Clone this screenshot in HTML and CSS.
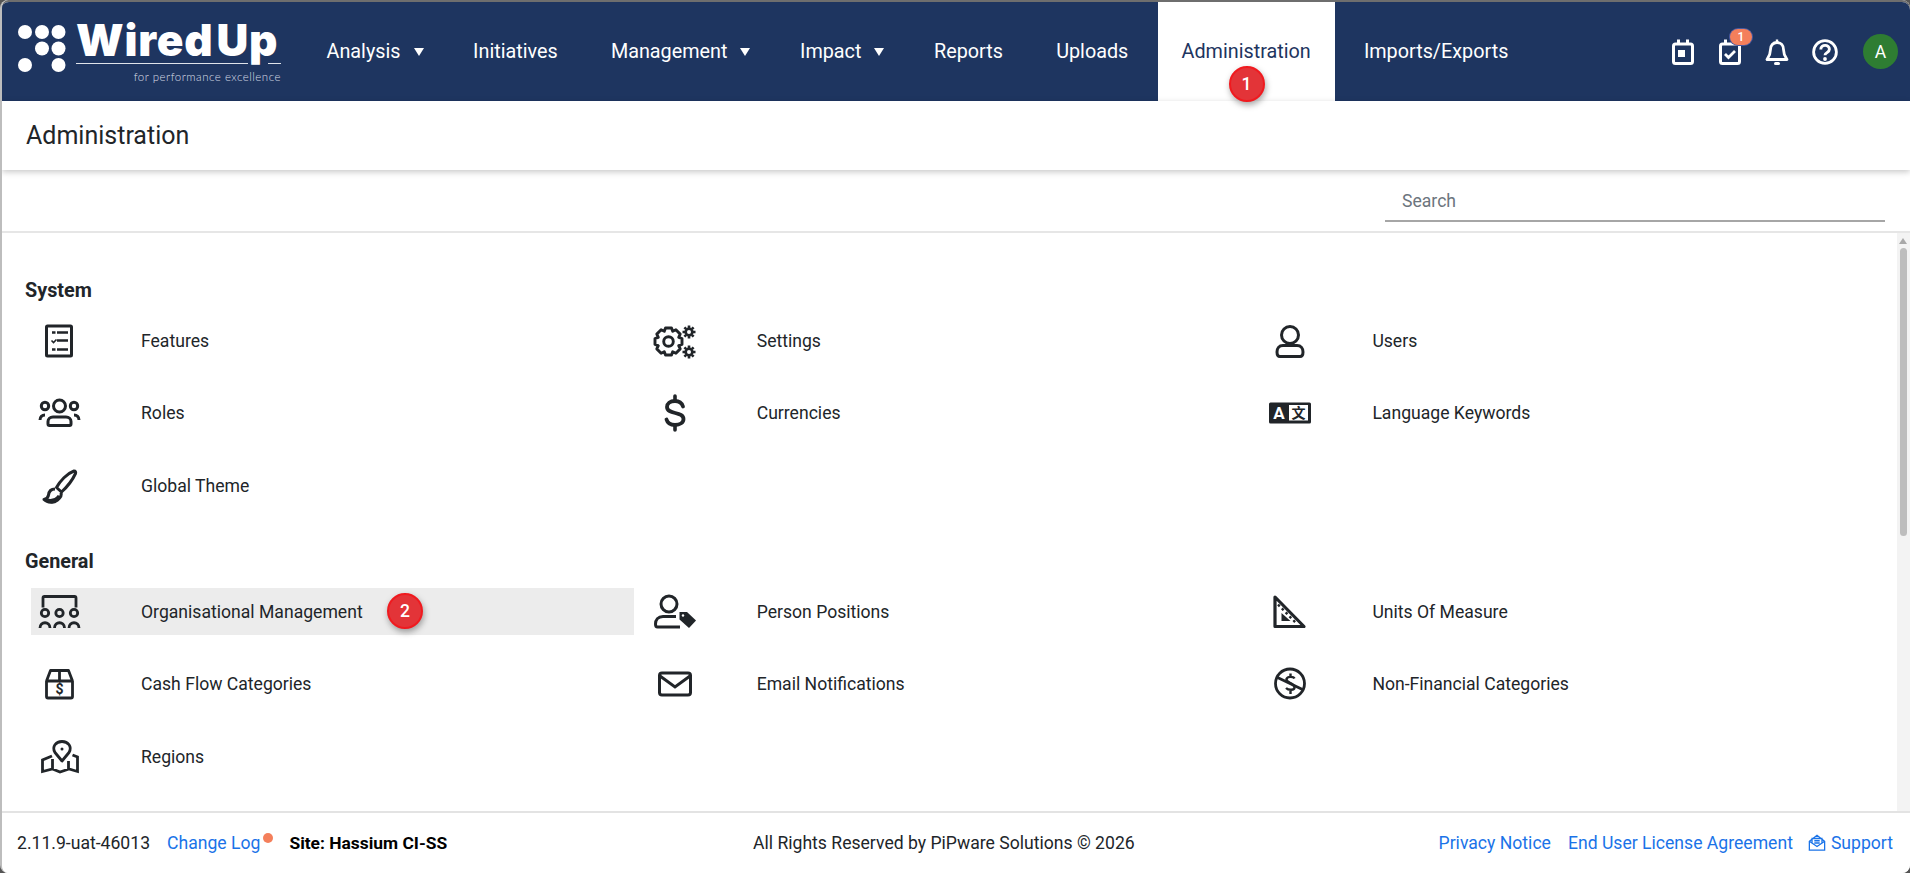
FILE: index.html
```html
<!DOCTYPE html>
<html lang="en">
<head>
<meta charset="utf-8">
<title>Administration</title>
<link rel="stylesheet" href="styles.css">
</head>
<body>
<div class="app">
  <header class="topbar">
    <a class="logo">
      <svg class="logo-dots" width="48" height="48" viewBox="0 0 48 48"><g fill="#fff"><circle cx="7" cy="7" r="7"/><circle cx="24" cy="7" r="7"/><circle cx="40.500" cy="7" r="7"/><circle cx="24" cy="23.500" r="7"/><circle cx="40.500" cy="23.500" r="7"/><circle cx="7" cy="40" r="7"/><circle cx="40.500" cy="40" r="7"/></g></svg>
      <span class="logo-text">
        <span class="logo-name">Wired<span class="logo-up">Up</span></span>
        <span class="logo-rule"><i class="rule-long"></i><i class="rule-short"></i></span>
        <span class="logo-sub">for performance excellence</span>
      </span>
    </a>
    <nav class="nav">
      <a class="nav-item">Analysis<i class="caret"></i></a>
      <a class="nav-item">Initiatives</a>
      <a class="nav-item">Management<i class="caret"></i></a>
      <a class="nav-item">Impact<i class="caret"></i></a>
      <a class="nav-item">Reports</a>
      <a class="nav-item">Uploads</a>
      <a class="nav-item active">Administration<span class="step step-nav">1</span></a>
      <a class="nav-item">Imports/Exports</a>
    </nav>
    <div class="tools">
      <svg class="tool" viewBox="0 0 24 28" width="24" height="28" fill="none" stroke="#fff" stroke-width="3"><rect x="2.500" y="6" width="19" height="19.500" rx="2"/><path d="M7.500 1.500v5M16.500 1.500v5"/><rect x="7" y="12" width="7" height="7" fill="#fff" stroke="none"/></svg>
      <span class="tool-wrap">
        <svg class="tool" viewBox="0 0 24 28" width="24" height="28" fill="none" stroke="#fff" stroke-width="3"><rect x="2.500" y="6" width="19" height="19.500" rx="2"/><path d="M7.500 1.500v5"/><path d="M7 16l3.500 3.500 6.500-6.500" stroke-width="2.800"/></svg>
        <span class="tool-badge">1</span>
      </span>
      <svg class="tool" viewBox="0 0 24 28" width="24" height="28" fill="none" stroke="#fff" stroke-width="2.800"><path d="M12 4.500c-4 0-6.500 3-6.500 7 0 5-1.500 7-3.500 10h20c-2-3-3.500-5-3.500-10 0-4-2.500-7-6.500-7z" stroke-linejoin="round"/><path d="M12 1.500v3" stroke-width="2.400"/><path d="M10.500 25.500h3" stroke-width="3" stroke-linecap="round"/></svg>
      <svg class="tool" viewBox="0 0 26 26" width="26" height="26" fill="none" stroke="#fff" stroke-width="2.800"><circle cx="13" cy="13" r="11.400"/><path d="M8.800 10.500c0-5.500 8.600-5.500 8.600-.3 0 3.400-4.400 3.300-4.400 6" stroke-width="2.900"/><circle cx="13" cy="20" r="1.900" fill="#fff" stroke="none"/></svg>
      <span class="avatar">A</span>
    </div>
  </header>

  <div class="page-title">Administration</div>

  <div class="search-row">
    <input class="search" type="text" placeholder="Search">
  </div>

  <main class="content">
    <h2 class="group-title">System</h2>
    <div class="grid">
      <a class="row"><span class="ico"><svg viewBox="0 0 56 40" width="56" height="40" fill="none" stroke="#212529" stroke-width="3"><rect x="15.500" y="5" width="25" height="30" rx="1"/><path d="M21 11.500h3.500M26 11.500h11M26 19.500h11M21 28.500h3.500M26 28.500h11" stroke-width="2.600"/><path d="M20.500 19.500l2 2 3-3" stroke-width="1.600"/></svg></span>Features</a>
      <a class="row"><span class="ico"><svg viewBox="0 0 56 40" width="56" height="40" fill="none" stroke="#212529" stroke-width="2.900"><path transform="translate(21.500 20.500)" d="M-3-13.500H3L4.200-10.200 7.400-11.700 11.700-7.400 10.200-4.200 13.500-3V3L10.200 4.200 11.700 7.400 7.400 11.700 4.200 10.200 3 13.500H-3L-4.200 10.200-7.400 11.700-11.700 7.400-10.200 4.200-13.500 3V-3L-10.200-4.200-11.700-7.400-7.400-11.700-4.200-10.200z" stroke-linejoin="round"/><circle cx="21.500" cy="20.500" r="4.800"/><g stroke-width="2.600"><circle cx="42" cy="11" r="3.300"/><path d="M42 4.500v2.500M42 15v2.500M35.500 11H38M46 11h2.500M37.400 6.400l1.800 1.800M44.800 13.800l1.800 1.800M46.600 6.400l-1.800 1.800M39.200 13.800l-1.800 1.800"/><circle cx="42" cy="31" r="3.300"/><path d="M42 24.500v2.500M42 35v2.500M35.500 31H38M46 31h2.500M37.400 26.400l1.800 1.800M44.800 33.800l1.800 1.800M46.600 26.400l-1.800 1.800M39.200 33.800l-1.800 1.800"/></g></svg></span>Settings</a>
      <a class="row"><span class="ico"><svg viewBox="0 0 56 40" width="56" height="40" fill="none" stroke="#212529" stroke-width="3"><circle cx="28" cy="14" r="8.500"/><path d="M21 24.500h14c4 0 6 3 6 6.500 0 3-1 4.500-3 4.500H18c-2 0-3-1.500-3-4.500 0-3.500 2-6.500 6-6.500z"/></svg></span>Users</a>

      <a class="row"><span class="ico"><svg viewBox="0 0 56 40" width="56" height="40" fill="none" stroke="#212529" stroke-width="3"><circle cx="28.500" cy="13" r="6"/><circle cx="14" cy="13" r="3.700"/><circle cx="43" cy="13" r="3.700"/><path d="M22 24h13c3 0 5 2 5 4.500v2.500c0 1-.5 1.500-1.500 1.500h-20c-1 0-1.500-.5-1.500-1.500v-2.500c0-2.500 2-4.500 5-4.500zM9 27c0-3 2-5 5-5M48 27c0-3-2-5-5-5"/></svg></span>Roles</a>
      <a class="row"><span class="ico"><svg viewBox="0 0 56 40" width="56" height="40" fill="none" stroke="#212529"><path d="M28 3v5M28 32v5" stroke-width="3.600" stroke-linecap="round"/><path d="M36 13.500c-1-3-4-5.500-8-5.500-5 0-8 2.500-8 6 0 8 16.500 4 16.500 12 0 3.500-3.500 6-8.500 6-4.500 0-7.500-2-8.500-5.500" stroke-width="3.800" stroke-linecap="round"/></svg></span>Currencies</a>
      <a class="row"><span class="ico"><svg viewBox="0 0 56 40" width="56" height="40"><rect x="7" y="9.500" width="42" height="21" rx="1.500" fill="#212529"/><rect x="27" y="12" width="19" height="15.500" fill="#fff"/><text x="17" y="26" class="lang-a">A</text><text x="36.500" y="25" class="lang-b">文</text></svg></span>Language Keywords</a>

      <a class="row"><span class="ico"><svg viewBox="0 0 56 40" width="56" height="40" fill="none" stroke="#212529" stroke-width="3"><path d="M43 5c1.500 0 2 1 1.500 2.500C41.500 14 36 21 30.500 26l-5-4.500C29 15 36 7.500 43 5z" stroke-linejoin="round"/><path d="M24 23c-4 0-6 2-6.500 6-.3 2.500-2 4-4.500 4.500 3.500 3.500 10 3.500 13.500.5 3-2.500 4.500-5 3.500-7.500" stroke-linejoin="round"/><path d="M16 34c4 1 9 0 12-4-1 3-4 5.500-7 6z" fill="#212529"/></svg></span>Global Theme</a>
      <span class="row row-empty"></span>
      <span class="row row-empty"></span>
    </div>

    <h2 class="group-title group-second">General</h2>
    <div class="grid">
      <a class="row hover"><span class="ico"><svg viewBox="0 0 56 40" width="56" height="40" fill="none" stroke="#212529" stroke-width="2.800"><path d="M12 15.500V6c0-1 .5-1.500 1.500-1.500h30c1 0 1.500.5 1.500 1.500v9.500"/><circle cx="14" cy="21" r="3.700"/><circle cx="28.500" cy="21" r="3.700"/><circle cx="43" cy="21" r="3.700"/><path d="M9 36c0-7 10-7 10 0M23.500 36c0-7 10-7 10 0M38 36c0-7 10-7 10 0"/></svg></span>Organisational Management<span class="step step-row">2</span></a>
      <a class="row"><span class="ico"><svg viewBox="0 0 56 40" width="56" height="40" fill="none" stroke="#212529" stroke-width="3"><circle cx="22" cy="12" r="8"/><path d="M29 24.500H16c-5 0-7.500 3.500-7.500 7.500 0 2 .5 3 2 3H33"/><path d="M32.500 20h7.500l9 8.500-7 7.500-9.500-8.500z" fill="#212529" stroke="none"/><circle cx="36" cy="23.500" r="1.200" fill="#fff" stroke="none"/></svg></span>Person Positions</a>
      <a class="row"><span class="ico"><svg viewBox="0 0 56 40" width="56" height="40" fill="none" stroke="#212529" stroke-width="3.200"><path d="M13 5L42 34.500H13z" stroke-linejoin="round"/><path d="M19.500 21L28.500 29H19.500z" fill="#212529" stroke="none"/><path d="M16 12.500L35 32" stroke-width="2.400" stroke-dasharray="2.500 3"/></svg></span>Units Of Measure</a>

      <a class="row"><span class="ico"><svg viewBox="0 0 56 40" width="56" height="40" fill="none" stroke="#212529" stroke-width="2.800"><path d="M15.500 17v15.500c0 1 .5 1.500 1.500 1.500h23c1 0 1.500-.5 1.500-1.500V17zM15.500 17l4-10.500h18l4 10.500M28.500 6.500V17" stroke-linejoin="round"/><text x="28.500" y="30" class="cash-sign">$</text></svg></span>Cash Flow Categories</a>
      <a class="row"><span class="ico"><svg viewBox="0 0 56 40" width="56" height="40" fill="none" stroke="#212529" stroke-width="3"><rect x="12.500" y="9" width="31" height="22" rx="2.500"/><path d="M13 12l15 11 15-11"/></svg></span>Email Notifications</a>
      <a class="row"><span class="ico"><svg viewBox="0 0 56 40" width="56" height="40" fill="none" stroke="#212529" stroke-width="2.800"><circle cx="28" cy="19.500" r="14.500"/><path d="M15.500 13.500l25 12"/><path d="M32.500 14.500c-1-2-7-2.500-8 .5-1 4 8 3.500 8 8.500 0 3-6 3-8.500 .5M28.500 9.500v3M28.500 27v3" stroke-width="2.400"/></svg></span>Non-Financial Categories</a>

      <a class="row"><span class="ico"><svg viewBox="0 0 56 40" width="56" height="40" fill="none" stroke="#212529" stroke-width="2.800"><path d="M31 24l-7-8.500c-3.500-6 1-11 7-11s10.500 5 7 11z" stroke-linejoin="round"/><circle cx="31" cy="12" r="1.500" fill="#212529" stroke="none"/><path d="M21 19l-9.500 4v11.500l10-2.500 7.500 3 9-3 8.500 2.500V20l-5-2M21.500 22v10M37.500 24v8"/></svg></span>Regions</a>
      <span class="row row-empty"></span>
      <span class="row row-empty"></span>
    </div>
    <div class="scrollbar"><i class="scroll-arrow"></i><i class="scroll-thumb"></i></div>
  </main>

  <footer class="footer">
    <div class="foot-left">
      <span>2.11.9-uat-46013</span>
      <a class="link changelog">Change Log<i class="dot"></i></a>
      <strong class="site">Site: Hassium CI-SS</strong>
    </div>
    <div class="foot-mid">All Rights Reserved by PiPware Solutions © 2026</div>
    <div class="foot-right">
      <a class="link">Privacy Notice</a>
      <a class="link">End User License Agreement</a>
      <a class="link support"><svg viewBox="0 0 20 20" width="18" height="18" fill="none" stroke="#1a73e8" stroke-width="1.400"><path d="M1.500 8v10h17V8L10 1.500zM1.500 8l8.500 6 8.500-6M4.500 10V5h11v5M7 7.500h6M7 10h6"/></svg>Support</a>
    </div>
  </footer>
</div>
</body>
</html>
```
FILE: styles.css
```css
* { box-sizing: border-box; }
html, body { margin: 0; height: 100%; overflow: hidden; }
body { background: #555; font-family: Roboto, "Liberation Sans", sans-serif; color: #212529; }
.app { height: 873px; padding-top: 2px; display: flex; flex-direction: column; background: #fff; border-left: 2px solid #bdbdbd; border-radius: 8px; overflow: hidden; box-shadow: inset 0 2px 0 #6e6e6e; }
.topbar { height: 99px; flex: none; display: flex; align-items: stretch; background: #1e3560; color: #fff; border-radius: 8px 8px 0 0; margin-left: -1px; }
.logo { display: flex; flex: none; width: 301.500px; padding: 23px 0 0 17px; gap: 10px; }
.logo-dots { flex: none; }
.logo-text { display: flex; flex-direction: column; width: 205px; margin-top: -4px; }
.logo-name { display: flex; height: 38px; font: 900 44px/38px Inter, sans-serif; letter-spacing: .8px; white-space: nowrap; }
.logo-up { margin-left: 3px; }
.logo-rule { display: flex; justify-content: space-between; height: 1px; margin-top: 4px; }
.rule-long { display: block; width: 172px; background: #dfe3ea; }
.rule-short { display: block; width: 13px; background: #dfe3ea; }
.logo-sub { margin-top: 6px; font: 300 11.500px/13px Lato, sans-serif; letter-spacing: .5px; text-align: right; color: #d8dde6; }
.nav { display: flex; align-items: stretch; flex: none; gap: 5.200px; }
.nav-item { position: relative; display: flex; align-items: center; padding: 0 24px; font-size: 19.800px; color: #fff; }
.caret { display: inline-block; width: 0; height: 0; margin: 0 -3.600px 0 13px; border-left: 5.500px solid transparent; border-right: 5.500px solid transparent; border-top: 8px solid #fff; }
.nav-item.active { background: #fff; color: #1e3560; }
.step { display: flex; align-items: center; justify-content: center; width: 36px; height: 36px; border-radius: 50%; background: #e33438; border: 2px solid #f01a1f; color: #fff; font-size: 17.600px; font-weight: 500; box-shadow: 1px 3px 6px rgba(0,0,0,.35); }
.step-nav { position: absolute; left: 71px; bottom: -1px; z-index: 2; }
.step-row { position: absolute; left: 356px; top: 5px; }
.tools { margin-left: auto; display: flex; align-items: center; gap: 23px; padding-right: 12px; }
.tool-wrap { position: relative; display: flex; }
.tool-badge { position: absolute; left: 12px; top: -9px; width: 22px; height: 16px; border-radius: 8px; background: #f47f5b; color: #fff; font-size: 12px; font-weight: 500; display: flex; align-items: center; justify-content: center; box-shadow: 0 0 0 1px #4a5aa0; }
.avatar { width: 35px; height: 35px; margin-left: 2px; border-radius: 50%; background: #2e7d32; color: #fff; font-size: 17.600px; display: flex; align-items: center; justify-content: center; }
.page-title { height: 69px; flex: none; display: flex; align-items: center; padding-left: 24px; font-size: 25px; background: #fff; box-shadow: 0 2px 6px rgba(0,0,0,.22); position: relative; z-index: 1; }
.search-row { height: 63px; flex: none; display: flex; justify-content: flex-end; padding-right: 25px; border-bottom: 2px solid #e6e6e6; }
.search { width: 500px; height: 52px; padding: 12px 0 0 17px; border: 0; border-bottom: 2px solid #a6a6a6; font: 17.600px Roboto, sans-serif; outline: 0; background: transparent; }
.search::placeholder { color: #6c757d; }
.content { position: relative; flex: 1; min-height: 0; overflow: hidden; padding: 46px 0 0 23px; }
.scrollbar { position: absolute; right: 0; top: 0; bottom: 0; width: 13px; background: #f3f3f3; }
.scroll-arrow { position: absolute; left: 2px; top: 5px; width: 0; height: 0; border-left: 4.500px solid transparent; border-right: 4.500px solid transparent; border-bottom: 6px solid #a8a8a8; }
.scroll-thumb { position: absolute; left: 3px; top: 15px; width: 7px; height: 288px; border-radius: 4px; background: #bdbdbd; }
.group-title { margin: 0; font-size: 19.800px; font-weight: 700; line-height: 24px; }
.group-second { margin-top: 41px; }
.grid { display: grid; grid-template-columns: repeat(3, 603px); column-gap: 12.700px; row-gap: 25.500px; padding: 14px 0 0 6px; }
.row { position: relative; height: 47px; display: flex; align-items: center; font-size: 17.600px; color: #212529; }
.row-empty { visibility: hidden; }
.row.hover { background: #ececec; }
.ico { width: 110px; flex: none; }
.ico svg { display: block; }
.lang-a { font: 700 17px Roboto, sans-serif; fill: #fff; text-anchor: middle; }
.lang-b { font: 700 14px "Noto Sans CJK SC", sans-serif; fill: #212529; text-anchor: middle; }
.cash-sign { font: 700 14px Roboto, sans-serif; fill: #212529; text-anchor: middle; stroke: none; }
.footer { height: 62px; flex: none; display: flex; align-items: center; position: relative; padding: 0 17px 0 15px; border-top: 2px solid #e3e3e3; font-size: 17.600px; background: #fff; }
.foot-left { display: flex; gap: 17px; align-items: center; flex: 1; }
.site { color: #000; font-weight: 700; font-size: 17.400px; }
.foot-mid { position: absolute; left: 751px; }
.foot-right { display: flex; gap: 17px; align-items: center; }
.link { color: #1a73e8; position: relative; }
.changelog { padding-right: 12px; }
.dot { position: absolute; right: -1px; top: 0; width: 10px; height: 10px; border-radius: 50%; background: #f47f5b; }
.support { display: flex; align-items: center; gap: 5px; margin-left: -2px; }
```
